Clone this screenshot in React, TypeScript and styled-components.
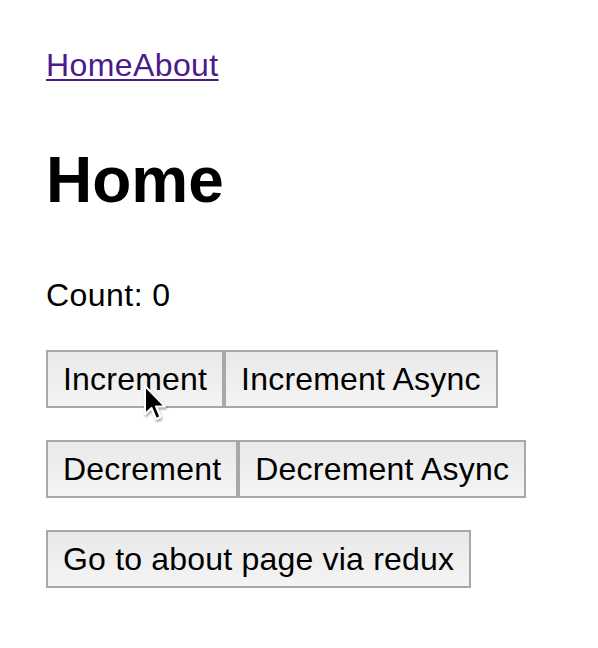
import React from "react";
import styled, { createGlobalStyle } from "styled-components";

const Global = createGlobalStyle`
  html, body { margin: 0; padding: 0; background: #fff; }
  body { font-family: "Liberation Sans", Arial, Helvetica, sans-serif; color: #000; }
`;

const Page = styled.div`
  padding: 47px 0 0 46px;
  position: relative;
`;

const Nav = styled.nav`
  font-size: 32px;
  line-height: 37px;
  height: 37px;
  letter-spacing: 0.4px;
`;

const NavLink = styled.a`
  color: #4b1a8b;
  text-decoration: underline;
  text-decoration-thickness: 2px;
  text-underline-offset: 3px;
`;

const Title = styled.h1`
  margin: 59px 0 0;
  font-size: 64px;
  line-height: 74px;
  font-weight: 700;
`;

const Count = styled.p`
  margin: 60px 0 0;
  font-size: 32px;
  line-height: 37px;
  letter-spacing: 0.45px;
`;

const Row = styled.div<{ $gap: number }>`
  display: flex;
  margin-top: ${(p) => p.$gap}px;
`;

const Button = styled.button`
  font-family: "Liberation Sans", Arial, Helvetica, sans-serif;
  font-size: 32px;
  line-height: 38px;
  letter-spacing: 0.2px;
  padding: 8px 15px;
  margin: 0;
  border: 2px solid #a8a8a8;
  border-radius: 0;
  background: linear-gradient(#e9e9e9, #f4f4f4);
  color: #000;
  cursor: default;
`;

const Cursor = styled.svg`
  position: absolute;
  left: 141px;
  top: 383px;
  width: 30px;
  height: 46px;
  pointer-events: none;
`;

export default function App() {
  return (
    <>
      <Global />
      <Page>
        <Nav>
          <NavLink href="#">Home</NavLink>
          <NavLink href="#">About</NavLink>
        </Nav>
        <Title>Home</Title>
        <Count>Count: 0</Count>
        <Row $gap={36}>
          <Button>Increment</Button>
          <Button>Increment Async</Button>
        </Row>
        <Row $gap={32}>
          <Button>Decrement</Button>
          <Button>Decrement Async</Button>
        </Row>
        <Row $gap={32}>
          <Button>Go to about page via redux</Button>
        </Row>
        <Cursor viewBox="0 0 30 46">
          <defs>
            <filter id="sh" x="-30%" y="-30%" width="160%" height="160%">
              <feDropShadow dx="1" dy="2" stdDeviation="1.2" floodColor="#000" floodOpacity="0.35" />
            </filter>
          </defs>
          <path
            d="M4 3 L4 31 L10.5 25 L15 36 L19.5 34 L15 23.5 L24 23.5 Z"
            fill="#000"
            stroke="#fff"
            strokeWidth="2"
            strokeLinejoin="round"
            filter="url(#sh)"
          />
        </Cursor>
      </Page>
    </>
  );
}
